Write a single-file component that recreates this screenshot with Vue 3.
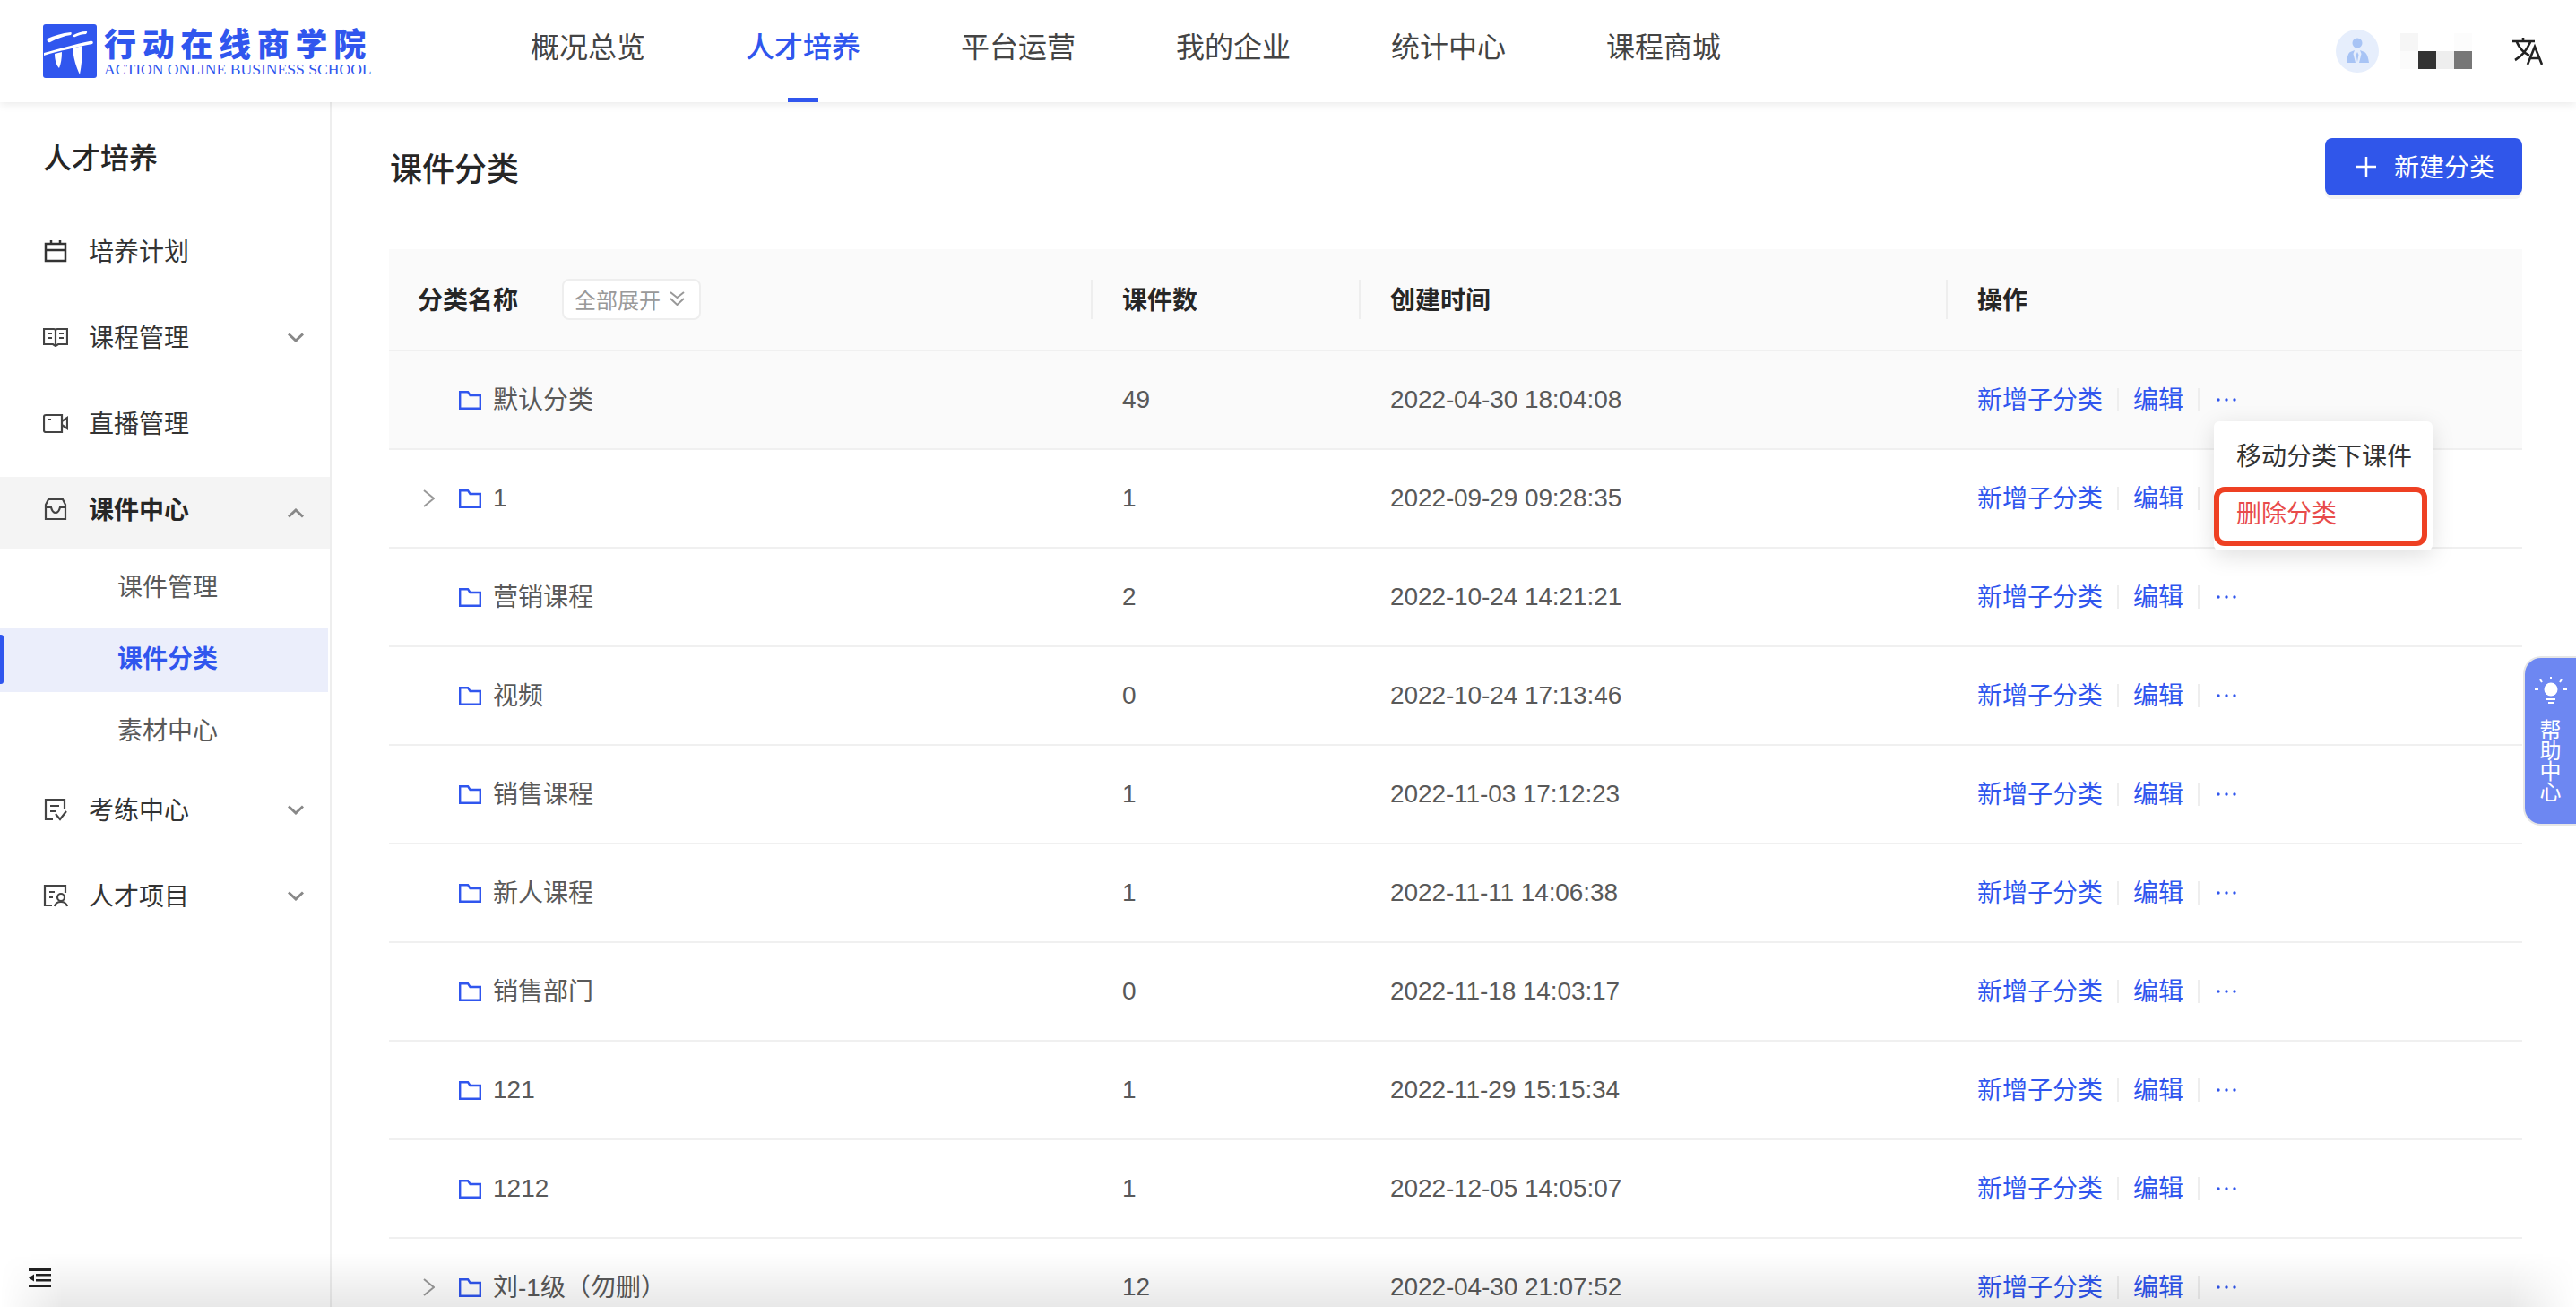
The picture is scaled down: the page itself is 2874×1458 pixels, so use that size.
<script setup>
const navs = ["概况总览", "人才培养", "平台运营", "我的企业", "统计中心", "课程商城"];

const mosaic = ["#f6f6f6", "#ffffff", "#ffffff", "#fcfcfc", "#fbfbfb", "#333333", "#eeeeee", "#777777"];

const rows = [
  { name: "默认分类", count: 49, time: "2022-04-30 18:04:08", hover: true, menu: true },
  { name: "1", count: 1, time: "2022-09-29 09:28:35", arrow: true },
  { name: "营销课程", count: 2, time: "2022-10-24 14:21:21" },
  { name: "视频", count: 0, time: "2022-10-24 17:13:46" },
  { name: "销售课程", count: 1, time: "2022-11-03 17:12:23" },
  { name: "新人课程", count: 1, time: "2022-11-11 14:06:38" },
  { name: "销售部门", count: 0, time: "2022-11-18 14:03:17" },
  { name: "121", count: 1, time: "2022-11-29 15:15:34" },
  { name: "1212", count: 1, time: "2022-12-05 14:05:07" },
  { name: "刘-1级（勿删）", count: 12, time: "2022-04-30 21:07:52", arrow: true },
];

const isCjk = (s) => /[^\x00-\x7f]/.test(s);
</script>

<template>
  <div class="page">
    <header class="top">
      <div class="logo">
        <svg class="logo-mark" width="60" height="60" viewBox="0 0 60 60">
          <rect width="60" height="60" rx="3" fill="#3056ee" />
          <path d="M5 16C12 13 21 10 31 9C32 9 32 11 31 12C24 13 15 16 8 20C5 21 4 18 5 16Z" fill="#fff" />
          <path d="M34 12C38 10 43 8 48 8C50 8 49 10 48 11C44 11 40 12 36 14C34 15 33 13 34 12Z" fill="#fff" />
          <path d="M1 32C16 28 36 22 52 19C55 18 57 20 55 22C44 24 36 26 28 28C18 30 9 32 1 35Z" fill="#fff" />
          <path d="M13 33L21 31C21 38 20 44 18 49C15 46 13 40 13 33Z" fill="#fff" />
          <path d="M33 27L44 24C44 35 43 46 41 56C37 48 34 38 33 27Z" fill="#fff" />
        </svg>
        <div class="logo-text">
          <div class="logo-cn">行动在线商学院</div>
          <div class="logo-en">ACTION ONLINE BUSINESS SCHOOL</div>
        </div>
      </div>
      <nav class="nav">
        <a v-for="n in navs" :key="n" class="nav-item" :class="{ on: n === '人才培养' }">{{ n }}</a>
      </nav>
      <div class="user">
        <svg class="avatar" width="48" height="48" viewBox="0 0 48 48">
          <circle cx="24" cy="24" r="24" fill="#e6eefc" />
          <circle cx="24" cy="15" r="5.5" fill="#a8c4f5" />
          <path d="M21 23L16 25C14 26 13 29 12 37H22L19.5 27Z" fill="#a8c4f5" />
          <path d="M27 23L32 25C34 26 36 29 37 37H26L28.5 27Z" fill="#a8c4f5" />
          <path d="M24 25L25.5 28L24 36L22.5 28Z" fill="#a8c4f5" />
        </svg>
        <div class="mosaic">
          <i v-for="(c, i) in mosaic" :key="i" :style="{ background: c }"></i>
        </div>
        <svg class="lang" width="34" height="30" viewBox="0 0 34 30" fill="none" stroke="#222" stroke-width="2.6">
          <path d="M0 4H25M12 0V4M5 5C8 12 13 17 19 20M20 5C16 14 10 21 3 25" />
          <path d="M17 30L25 10L33 30M20 23H30" />
        </svg>
      </div>
    </header>

    <div class="body">
      <aside class="side">
        <h2 class="side-title">人才培养</h2>

        <div class="menu-row">
          <svg class="menu-icon" width="28" height="26" viewBox="0 0 28 26" fill="none" stroke="#333" stroke-width="2.5">
            <path d="M3 5H25V24H3ZM3 12H25M9 1V5M19 1V5" />
          </svg>
          <span>培养计划</span>
        </div>
        <div class="menu-row">
          <svg class="menu-icon" width="28" height="22" viewBox="0 0 28 22" fill="none" stroke="#444" stroke-width="2.2">
            <path d="M1 2H12C13 2 14 3 14 4C14 3 15 2 16 2H27V19H17L14 21L11 19H1ZM14 4V20M5 7H10M5 12H10M18 7H23M18 12H23" />
          </svg>
          <span>课程管理</span>
          <svg class="chev" width="18" height="11" viewBox="0 0 18 11" fill="none" stroke="#888" stroke-width="3"><path d="M1 1.5L9 9L17 1.5" /></svg>
        </div>
        <div class="menu-row">
          <svg class="menu-icon" width="28" height="22" viewBox="0 0 28 22" fill="none" stroke="#444" stroke-width="2.2">
            <path d="M3 2H21V21H3C2 21 1 20 1 19V4C1 3 2 2 3 2ZM21 9L27 5V17L21 13M6 7H9" />
          </svg>
          <span>直播管理</span>
        </div>
        <div class="menu-row open">
          <svg class="menu-icon" width="28" height="26" viewBox="0 0 28 26" fill="none" stroke="#444" stroke-width="2.2">
            <path d="M6 2H22L25 8V24H3V8ZM3 11H9C10 15 12 17 14 17C16 17 18 15 19 11H25" />
          </svg>
          <span class="bold">课件中心</span>
          <svg class="chev" width="18" height="11" viewBox="0 0 18 11" fill="none" stroke="#888" stroke-width="3"><path d="M1 9.5L9 2L17 9.5" /></svg>
        </div>
        <div class="sub">
          <div class="sub-row">课件管理</div>
          <div class="sub-row on">课件分类</div>
          <div class="sub-row">素材中心</div>
        </div>
        <div class="menu-row after-sub">
          <svg class="menu-icon" width="28" height="26" viewBox="0 0 28 26" fill="none" stroke="#444" stroke-width="2.2">
            <path d="M11 24H3V2H24V13M8 9H18M8 15H14M14 18L19 24L26 15" />
          </svg>
          <span>考练中心</span>
          <svg class="chev" width="18" height="11" viewBox="0 0 18 11" fill="none" stroke="#888" stroke-width="3"><path d="M1 1.5L9 9L17 1.5" /></svg>
        </div>
        <div class="menu-row">
          <svg class="menu-icon" width="28" height="26" viewBox="0 0 28 26" fill="none" stroke="#444" stroke-width="2.2">
            <path d="M10 24H2V2H25V10M7 9H13M7 15H11" />
            <circle cx="20" cy="15" r="4" />
            <path d="M13 25C14 21 17 20 20 20C23 20 26 21 27 25" />
          </svg>
          <span>人才项目</span>
          <svg class="chev" width="18" height="11" viewBox="0 0 18 11" fill="none" stroke="#888" stroke-width="3"><path d="M1 1.5L9 9L17 1.5" /></svg>
        </div>

        <div class="side-foot">
          <svg width="25" height="21" viewBox="0 0 25 21" fill="#222">
            <rect width="25" height="3" />
            <rect y="18" width="25" height="3" />
            <rect x="8" y="6" width="17" height="2.5" />
            <rect x="8" y="12" width="17" height="2.5" />
            <path d="M0 10.5L6 6.5V14.5Z" />
          </svg>
        </div>
      </aside>

      <main class="main">
        <div class="head">
          <h1>课件分类</h1>
          <button class="add">
            <svg width="22" height="22" viewBox="0 0 22 22" stroke="#fff" stroke-width="2.5"><path d="M11 0V22M0 11H22" /></svg>
            <span>新建分类</span>
          </button>
        </div>

        <div class="table">
          <div class="tr th">
            <div class="cell first">
              <b class="th-name">分类名称</b>
              <span class="expand">
                全部展开
                <svg width="17" height="16" viewBox="0 0 17 16" fill="none" stroke="#999" stroke-width="2"><path d="M1 1L8.5 7L16 1M1 8L8.5 15L16 8" /></svg>
              </span>
            </div>
            <div class="cell sep"><b>课件数</b></div>
            <div class="cell sep"><b>创建时间</b></div>
            <div class="cell sep"><b>操作</b></div>
          </div>

          <div v-for="r in rows" :key="r.name" class="tr" :class="{ hover: r.hover }">
            <div class="cell name">
              <span class="arrow">
                <svg v-if="r.arrow" width="13" height="20" viewBox="0 0 13 20" fill="none" stroke="#999" stroke-width="2"><path d="M1 1L12 10L1 19" /></svg>
              </span>
              <svg class="folder" width="25" height="21" viewBox="0 0 25 21" fill="none" stroke="#3056ee" stroke-width="2.4">
                <path d="M1.2 1.2H10L12.5 5H23.8V19.8H1.2Z" />
              </svg>
              <span :class="{ lift: isCjk(r.name) }">{{ r.name }}</span>
            </div>
            <div class="cell">{{ r.count }}</div>
            <div class="cell time">{{ r.time }}</div>
            <div class="cell ops" :class="{ raised: r.menu }">
              <a class="lift">新增子分类</a>
              <i class="bar"></i>
              <a class="lift">编辑</a>
              <i class="bar"></i>
              <svg class="dots" width="22" height="6" viewBox="0 0 22 6" fill="#3056ee">
                <circle cx="2" cy="3" r="1.7" /><circle cx="11" cy="3" r="1.7" /><circle cx="20" cy="3" r="1.7" />
              </svg>
              <div v-if="r.menu" class="drop">
                <div class="drop-item">移动分类下课件</div>
                <div class="drop-item danger">删除分类</div>
              </div>
            </div>
          </div>
        </div>
      </main>
    </div>

    <div class="help">
      <svg width="36" height="36" viewBox="0 0 36 36" fill="none" stroke="#fff" stroke-width="2">
        <circle cx="18" cy="15" r="7.5" fill="#fff" stroke="none" />
        <path d="M18 1V4M6 4L8 7M30 4L28 7M0 15H4M32 15H36M13 26H23M15 30H21" />
      </svg>
      <span>帮助中心</span>
    </div>

    <div class="fade"></div>
  </div>
</template>

<style>
html,
body {
  margin: 0;
  background: #fff;
  overflow: hidden;
}
</style>

<style scoped>
.page {
  position: relative;
  width: 2874px;
  height: 1458px;
  overflow: hidden;
  font-family: "Liberation Sans", "Noto Sans CJK SC", sans-serif;
  color: #595959;
  font-size: 28px;
}

.top {
  position: relative;
  z-index: 3;
  height: 114px;
  display: flex;
  align-items: center;
  background: #fff;
  box-shadow: 0 2px 10px rgba(0, 0, 0, 0.09);
}
.logo {
  display: flex;
  gap: 8px;
  margin-left: 48px;
  width: 544px;
  height: 60px;
}
.logo-mark {
  flex: none;
}
.logo-cn {
  font-family: "Noto Sans CJK SC", sans-serif;
  font-weight: 900;
  font-size: 36px;
  line-height: 40px;
  letter-spacing: 6.7px;
  color: #3056ee;
}
.logo-en {
  font-family: "Liberation Serif", serif;
  font-size: 17.6px;
  line-height: 18px;
  margin-top: 1px;
  color: #3056ee;
  white-space: nowrap;
}
.nav {
  display: flex;
  gap: 112px;
  height: 114px;
}
.nav-item {
  position: relative;
  font-family: "Noto Sans CJK SC", sans-serif;
  font-size: 32px;
  line-height: 101px;
  color: #444;
}
.nav-item.on {
  color: #3056ee;
  font-weight: 500;
}
.nav-item.on::after {
  content: "";
  position: absolute;
  left: 47px;
  bottom: 0;
  width: 34px;
  height: 5px;
  background: #3056ee;
}
.user {
  margin-left: auto;
  display: flex;
  align-items: center;
}
.avatar {
  margin-right: 24px;
}
.mosaic {
  display: grid;
  grid-template-columns: repeat(4, 20px);
  grid-auto-rows: 20px;
  margin-right: 45px;
}
.lang {
  margin-right: 37px;
}

.body {
  display: flex;
  height: 1344px;
}

.side {
  flex: none;
  box-sizing: border-box;
  width: 370px;
  border-right: 2px solid #eeeeee;
  display: flex;
  flex-direction: column;
  color: #333;
}
.side-title {
  margin: 38px 0 44px 48px;
  font-size: 32px;
  line-height: 44px;
  font-weight: 500;
  color: #262626;
  font-family: "Noto Sans CJK SC", sans-serif;
}
.menu-row {
  height: 80px;
  flex: none;
  display: flex;
  align-items: center;
  padding: 0 29px 0 48px;
  margin-bottom: 16px;
}
.menu-row span {
  margin-left: 23px;
  padding-bottom: 3px;
}
.menu-icon {
  flex: none;
}
.chev {
  margin-left: auto;
}
.menu-row.open {
  box-sizing: border-box;
  margin-top: 4px;
  margin-bottom: 0;
  padding-bottom: 8px;
  background: #f4f4f4;
}
.menu-row.open .chev {
  margin-top: 8px;
}
.bold {
  font-weight: 600;
  color: #262626;
}
.sub {
  display: flex;
  flex-direction: column;
  gap: 8px;
  margin-top: 8px;
}
.sub-row {
  position: relative;
  width: 366px;
  height: 72px;
  line-height: 72px;
  padding-left: 131px;
  box-sizing: border-box;
  color: #595959;
}
.sub-row.on {
  background: #ebeefb;
  color: #3056ee;
  font-weight: 600;
}
.sub-row.on::before {
  content: "";
  position: absolute;
  left: 0;
  top: 8px;
  width: 4px;
  height: 55px;
  background: #3056ee;
  border-radius: 0 3px 3px 0;
}
.after-sub {
  margin-top: 11px;
}
.side-foot {
  margin-top: auto;
  padding: 0 0 15px 32px;
}

.main {
  flex: 1;
  padding: 40px 60px 0 64px;
  min-width: 0;
}
.head {
  display: flex;
  align-items: center;
  justify-content: space-between;
  height: 64px;
  margin-bottom: 60px;
}
.head h1 {
  margin: 0 0 0 1px;
  font-family: "Noto Sans CJK SC", sans-serif;
  font-size: 36px;
  line-height: 50px;
  font-weight: 500;
  color: #262626;
}
.add {
  display: flex;
  align-items: center;
  gap: 20px;
  width: 220px;
  height: 64px;
  padding: 0 0 0 35px;
  border: 0;
  border-radius: 8px;
  background: #3056ea;
  color: #fff;
  font: inherit;
  box-shadow: 0 4px 0 #f3f3f3;
}
.add span {
  padding-bottom: 3px;
}

.tr {
  display: grid;
  grid-template-columns: 786px 299px 655px 1fr;
  height: 110px;
  box-sizing: border-box;
  border-bottom: 2px solid #f0f0f0;
}
.tr.th {
  height: 114px;
  background: #fafafa;
}
.tr.hover {
  background: #fafafa;
}
.cell {
  position: relative;
  display: flex;
  align-items: center;
  padding-left: 32px;
}
.th .cell b {
  font-weight: 600;
  color: #262626;
  padding-bottom: 3px;
}
.sep::before {
  content: "";
  position: absolute;
  left: -3px;
  top: 34px;
  width: 2px;
  height: 44px;
  background: #eeeeee;
}
.expand {
  display: flex;
  align-items: center;
  gap: 10px;
  box-sizing: border-box;
  width: 155px;
  height: 46px;
  margin-left: 49px;
  padding: 0 0 2px 12px;
  background: #fff;
  border: 2px solid #eeeeee;
  border-radius: 8px;
  font-size: 24px;
  color: #999;
}
.cell.name {
  padding-left: 38px;
}
.arrow {
  flex: none;
  display: flex;
  width: 40px;
}
.folder {
  flex: none;
  margin-right: 13px;
}
.lift {
  padding-bottom: 5px;
}
.time {
  letter-spacing: -0.1px;
}
.ops {
  white-space: nowrap;
  color: #3056ee;
  gap: 16px;
}
.ops.raised {
  z-index: 2;
}
.dots {
  margin-left: 3px;
}
.bar {
  width: 2px;
  height: 26px;
  background: #eeeeee;
}
.drop {
  position: absolute;
  left: 296px;
  top: 78px;
  width: 244px;
  height: 144px;
  background: #fff;
  border-radius: 6px;
  box-shadow: 0 6px 26px rgba(0, 0, 0, 0.13);
  color: #333;
}
.drop-item {
  height: 73px;
  padding: 4px 0 0 25px;
  line-height: 72px;
  box-sizing: border-box;
}
.drop-item.danger {
  width: 238px;
  height: 66px;
  padding: 0 0 0 19px;
  line-height: 50px;
  border: 6px solid #ee4023;
  border-radius: 12px;
  color: #e84b4b;
}

.help {
  position: absolute;
  right: 0;
  top: 732px;
  z-index: 4;
  box-sizing: border-box;
  width: 59px;
  height: 189px;
  padding-top: 20px;
  display: flex;
  flex-direction: column;
  align-items: center;
  gap: 13px;
  background: #6d87f2;
  border: 2px solid #e6e6e6;
  border-right: 0;
  border-radius: 20px 0 0 20px;
  color: #fff;
  font-size: 24px;
  line-height: 23px;
}
.help span {
  width: 24px;
  text-align: center;
}

.fade {
  position: absolute;
  left: 0;
  right: 0;
  bottom: 0;
  height: 60px;
  z-index: 5;
  pointer-events: none;
  background: linear-gradient(rgba(0, 0, 0, 0), rgba(0, 0, 0, 0.09));
  mask-image: linear-gradient(to right, transparent, #000 70px, #000 2800px, transparent);
}
</style>
